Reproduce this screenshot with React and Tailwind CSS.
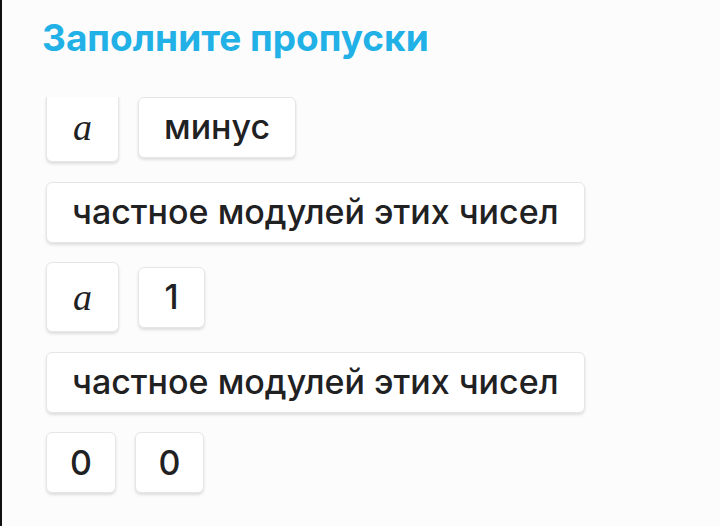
import React from "react";

const box =
  "flex items-center justify-center rounded-[6px] border border-[#e6e6e6] bg-white shadow-[0_2px_3px_rgba(0,0,0,0.12)] text-[34px] font-medium leading-none text-[#1f2123]";

const Word = ({ children }) => (
  <div className={`${box} h-[61px] px-[25px]`}>{children}</div>
);

const MathA = () => (
  <div className={`${box} h-[70px] w-[73px]`}>
    <span className="font-['Liberation_Serif',serif] font-normal italic text-[38px]">a</span>
  </div>
);

const Digit = ({ children, w = "w-[67px]" }) => (
  <div className={`${box} h-[61px] ${w}`}>{children}</div>
);

export default function App() {
  const rows = [
    <>
      <MathA />
      <Word>минус</Word>
    </>,
    <Word>частное модулей этих чисел</Word>,
    <>
      <MathA />
      <Digit>1</Digit>
    </>,
    <Word>частное модулей этих чисел</Word>,
    <>
      <Digit w="w-[70px]">0</Digit>
      <Digit w="w-[69px]">0</Digit>
    </>,
  ];

  return (
    <div className="h-[526px] w-[720px] overflow-hidden border-l-2 border-[#111] bg-[#fcfcfc] font-['Inter',sans-serif]">
      <h1 className="pl-[40px] pt-[14px] text-[37px] font-bold leading-[48px] text-[#22b1e6]">
        Заполните пропуски
      </h1>
      <div className="mt-[35px] h-[429px] overflow-hidden pl-[44px]">
        <div className="-mt-[5px] flex flex-col items-start gap-[19.5px] pb-[6px]">
          {rows.map((r, i) => (
            <div key={i} className="flex items-center gap-[19px]">
              {r}
            </div>
          ))}
        </div>
      </div>
    </div>
  );
}
